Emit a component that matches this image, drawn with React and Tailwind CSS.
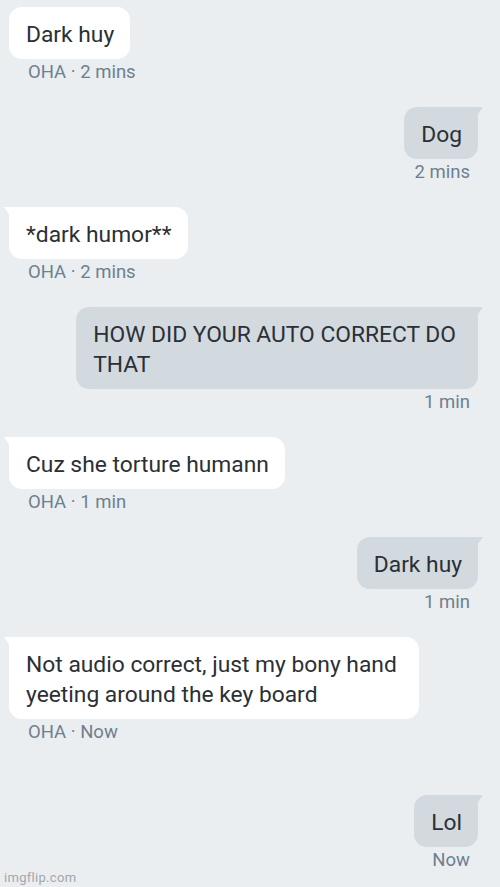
import React from 'react';

// Chat thread screenshot: incoming (white, left) and outgoing (grey, right) bubbles
const messages = [
  { side: 'in', lines: ['Dark huy'], meta: 'OHA · 2 mins', tail: false },
  { side: 'out', lines: ['Dog'], meta: '2 mins' },
  { side: 'in', lines: ['*dark humor**'], meta: 'OHA · 2 mins' },
  { side: 'out', lines: ['HOW DID YOUR AUTO CORRECT DO', 'THAT'], meta: '1 min' },
  { side: 'in', lines: ['Cuz she torture humann'], meta: 'OHA · 1 min' },
  { side: 'out', lines: ['Dark huy'], meta: '1 min' },
  { side: 'in', lines: ['Not audio correct, just my bony hand', 'yeeting around the key board'], meta: 'OHA · Now', gapAfter: true },
  { side: 'out', lines: ['Lol'], meta: 'Now', end: true },
];

const Tail = ({ side, color }) => (
  <svg
    width="7"
    height="10"
    viewBox="0 0 7 10"
    className={`absolute top-0 ${side === 'in' ? '-left-[5px]' : '-right-[5px]'}`}
  >
    {side === 'in' ? (
      <path d="M0 0 L7 0 L7 10 Z" fill={color} />
    ) : (
      <path d="M0 0 L7 0 L0 10 Z" fill={color} />
    )}
  </svg>
);

const Message = ({ msg }) => {
  const isIn = msg.side === 'in';
  const bg = isIn ? '#ffffff' : '#d2d9df';
  const spacing = msg.end ? 'mb-0' : msg.gapAfter ? 'mb-[52px]' : 'mb-[24px]';
  const pr = msg.lines.length > 1 ? 'pr-[22px]' : 'pr-[16px]';
  return (
    <div className={`flex flex-col ${isIn ? 'items-start' : 'items-end'} ${spacing}`}>
      <div
        className={`relative pl-[17px] ${pr} pt-[13px] pb-[9px] text-[22.8px] leading-[30px] text-[#2b3036] ${
          isIn ? 'ml-[9px] bg-white rounded-[13px]' : 'mr-[22px] bg-[#d2d9df] rounded-[13px]'
        } ${isIn && msg.tail !== false ? 'rounded-tl-none' : ''} ${!isIn ? 'rounded-tr-none' : ''}`}
      >
        {msg.tail !== false && <Tail side={msg.side} color={bg} />}
        {msg.lines.map((l, i) => (
          <div key={i} className="whitespace-nowrap">{l}</div>
        ))}
      </div>
      <div className={`mt-[2px] text-[18.5px] leading-[22px] text-[#6d808f] ${isIn ? 'ml-[28px]' : 'mr-[30px]'}`}>
        {msg.meta}
      </div>
    </div>
  );
};

export default function App() {
  return (
    <div
      className="relative w-[500px] h-[887px] bg-[#ebeef1] pt-[7px] overflow-hidden"
      style={{ fontFamily: 'Roboto, "Noto Sans", sans-serif' }}
    >
      {messages.map((m, i) => (
        <Message key={i} msg={m} />
      ))}
      <div className="absolute left-[4px] bottom-[1px] text-[13px] leading-[16px] tracking-[0.3px] text-[#a3a7ab]">
        imgflip.com
      </div>
    </div>
  );
}
